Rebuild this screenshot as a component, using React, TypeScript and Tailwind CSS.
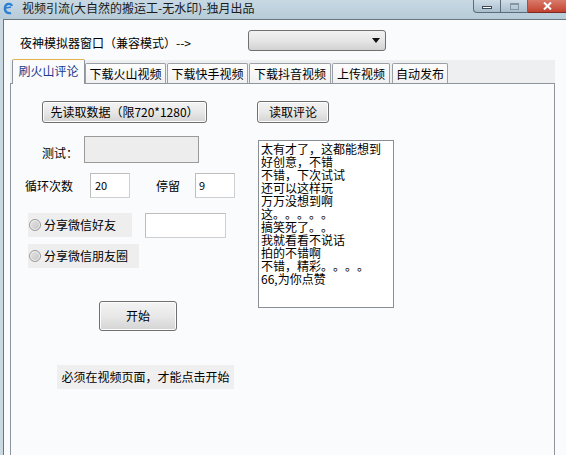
import React from "react";

const F = { fontFamily: '"Noto Sans CJK SC", "Liberation Sans", sans-serif' };

function Btn({ w, h, children, className = "" }: { w: string; h: string; children: React.ReactNode; className?: string }) {
  return (
    <div
      className={`${w} ${h} ${className} flex items-center justify-center rounded-[3px] border border-[#707070] bg-gradient-to-b from-[#f4f4f4] via-[#e8e8e8] to-[#d4d4d4] text-[12px] leading-none text-black shadow-[inset_0_0_0_1px_#fcfcfc]`}
    >
      {children}
    </div>
  );
}

function Radio() {
  return (
    <div className="h-[12px] w-[12px] rounded-full border border-[#9a9a9a] bg-gradient-to-br from-[#e6e6e6] to-[#c4c4c4] shadow-[inset_0_0_0_1px_#f4f4f4]" />
  );
}

const comments = [
  "太有才了，这都能想到",
  "好创意，不错",
  "不错，下次试试",
  "还可以这样玩",
  "万万没想到啊",
  "这。。。。。",
  "搞笑死了。。",
  "我就看看不说话",
  "拍的不错啊",
  "不错，精彩。。。。",
  "66,为你点赞",
];

export default function App() {
  return (
    <div style={F} className="relative h-[455px] w-[566px] overflow-hidden bg-[#fafbfd] text-[12px] text-black">
      {/* Title bar */}
      <div className="flex h-[19px] items-start bg-gradient-to-b from-[#c8d9e4] to-[#b6cbd8]">
        <svg className="ml-[3px] mt-[2px]" width="11" height="13" viewBox="0 0 11 13">
          <path d="M9 4 C8 1 3 1 2 5 C1 9 4 12 8 11" fill="none" stroke="#2a7fd4" strokeWidth="2.2" />
          <path d="M3 6 L8 5" stroke="#2a7fd4" strokeWidth="1.6" />
        </svg>
        <div className="ml-[8px] mt-[1px] text-[12px] leading-[14px] text-[#1a1a1a]">视频引流(大自然的搬运工-无水印)-独月出品</div>
        <div className="ml-auto flex h-[13px]">
          <div className="flex w-[28px] items-center justify-center rounded-bl-[4px] border border-t-0 border-[#5c6b78] bg-gradient-to-b from-[#cfdde7] to-[#a9bfce]">
            <div className="mt-[2px] h-[3px] w-[10px] border border-[#3d4a55] bg-white" />
          </div>
          <div className="flex w-[27px] items-center justify-center border-b border-r border-[#5c6b78] bg-gradient-to-b from-[#cfdde7] to-[#a9bfce]">
            <div className="h-[7px] w-[9px] border border-[#8796a3] border-t-2" />
          </div>
          <div className="flex w-[38px] items-center justify-center border-b border-[#7a2b22] bg-gradient-to-b from-[#d97a6a] to-[#c2402f]">
            <svg width="9" height="8" viewBox="0 0 9 8">
              <path d="M1 0.5 L8 7.5 M8 0.5 L1 7.5" stroke="#fff" strokeWidth="2" />
            </svg>
          </div>
        </div>
      </div>

      {/* Body */}
      <div className="flex h-[436px]">
        <div className="w-[3px] bg-[#cbd9e3]" />
        <div className="flex-1 border-l border-t border-[#6c747c] bg-[#fafbfd]">
          {/* Top row */}
          <div className="flex items-start">
            <div className="ml-[16px] mt-[15px] w-[228px] whitespace-nowrap leading-[16px]">夜神模拟器窗口（兼容模式）--&gt;</div>
            <div className="mt-[10px] flex h-[21px] w-[138px] items-center justify-end rounded-[3px] border border-[#707070] bg-gradient-to-b from-[#f2f2f2] via-[#e6e6e6] to-[#d2d2d2] pr-[5px]">
              <svg width="8" height="5" viewBox="0 0 8 5">
                <path d="M0 0 L8 0 L4 5 Z" fill="#111" />
              </svg>
            </div>
          </div>

          {/* Tab control */}
          <div className="ml-[6px] mt-[9px] w-[545px]">
            <div className="flex h-[23px] items-end bg-[#eeeff1]">
              <div className="relative z-10 -mb-[1px] ml-[2px] flex h-[25px] w-[73px] items-start justify-center rounded-t-[2px] border border-b-0 border-[#8e959c] border-t-[#e8b24a] bg-[#fafbfd] pt-[4px] leading-[14px] text-[#1b3a8c]">
                刷火山评论
              </div>
              <div className="flex h-[20px] w-[81px] items-center justify-center rounded-t-[2px] border border-b-0 border-[#9aa0a6] bg-gradient-to-b from-[#fdfdfd] to-[#f1f1f1] leading-[14px]">
                下载火山视频
              </div>
              <div className="ml-[1px] flex h-[20px] w-[81px] items-center justify-center rounded-t-[2px] border border-b-0 border-[#9aa0a6] bg-gradient-to-b from-[#fdfdfd] to-[#f1f1f1] leading-[14px]">
                下载快手视频
              </div>
              <div className="ml-[1px] flex h-[20px] w-[82px] items-center justify-center rounded-t-[2px] border border-b-0 border-[#9aa0a6] bg-gradient-to-b from-[#fdfdfd] to-[#f1f1f1] leading-[14px]">
                下载抖音视频
              </div>
              <div className="ml-[1px] flex h-[20px] w-[58px] items-center justify-center rounded-t-[2px] border border-b-0 border-[#9aa0a6] bg-gradient-to-b from-[#fdfdfd] to-[#f1f1f1] leading-[14px]">
                上传视频
              </div>
              <div className="ml-[2px] flex h-[20px] w-[56px] items-center justify-center rounded-t-[2px] border border-b-0 border-[#9aa0a6] bg-gradient-to-b from-[#fdfdfd] to-[#f1f1f1] leading-[14px]">
                自动发布
              </div>
            </div>

            {/* Panel */}
            <div className="h-[380px] border border-[#8e959c] bg-[#fafbfd]">
              <div className="mt-[17px] flex">
                <Btn w="w-[165px]" h="h-[22px]" className="ml-[31px]">先读取数据（限720*1280）</Btn>
                <Btn w="w-[72px]" h="h-[22px]" className="ml-[50px]">读取评论</Btn>
              </div>

              <div className="flex">
                {/* Left column */}
                <div className="w-[247px]">
                  <div className="mt-[13px] flex h-[27px] items-center">
                    <div className="ml-[31px] mt-[6px] w-[42px] leading-[14px]">测试：</div>
                    <div className="h-[27px] w-[115px] border border-[#9a9a9a] bg-[#ededed]" />
                  </div>
                  <div className="mt-[10px] flex h-[25px] items-center">
                    <div className="ml-[14px] w-[65px] leading-[14px]">循环次数</div>
                    <div className="flex h-[25px] w-[40px] items-center border border-[#cfcfcf] border-l-[#bdbdbd] border-t-[#bdbdbd] bg-white pl-[4px] text-[11px] leading-none">20</div>
                    <div className="ml-[26px] w-[39px] leading-[14px]">停留</div>
                    <div className="flex h-[25px] w-[40px] items-center border border-[#cfcfcf] border-l-[#bdbdbd] border-t-[#bdbdbd] bg-white pl-[3px] text-[11px] leading-none">9</div>
                  </div>
                  <div className="mt-[15px] flex h-[24px] items-center">
                    <div className="ml-[17px] flex h-[24px] w-[104px] items-center bg-[#eeeeee] pl-[1px]">
                      <Radio />
                      <span className="ml-[3px] leading-[14px]">分享微信好友</span>
                    </div>
                    <div className="ml-[13px] h-[25px] w-[81px] border border-[#cfcfcf] border-l-[#bdbdbd] border-t-[#bdbdbd] bg-white" />
                  </div>
                  <div className="mt-[7px] flex h-[24px] items-center">
                    <div className="ml-[17px] flex h-[24px] w-[111px] items-center bg-[#eeeeee] pl-[1px]">
                      <Radio />
                      <span className="ml-[3px] leading-[14px]">分享微信朋友圈</span>
                    </div>
                  </div>
                  <Btn w="w-[78px]" h="h-[30px]" className="ml-[88px] mt-[33px]">开始</Btn>
                  <div className="ml-[46px] mt-[34px] flex h-[24px] w-[177px] items-center justify-center bg-[#efefef] leading-[14px]">
                    必须在视频页面，才能点击开始
                  </div>
                </div>

                {/* Right listbox */}
                <div className="mt-[17px] h-[168px] w-[136px] border border-[#8a8f96] bg-white pl-[2px] pt-[1px] [text-spacing-trim:space-all]">
                  {comments.map((c) => (
                    <div key={c} className="whitespace-nowrap text-[12px] leading-[13px] [text-spacing-trim:space-all]">
                      {c}
                    </div>
                  ))}
                </div>
              </div>
            </div>
          </div>
        </div>
      </div>
    </div>
  );
}
